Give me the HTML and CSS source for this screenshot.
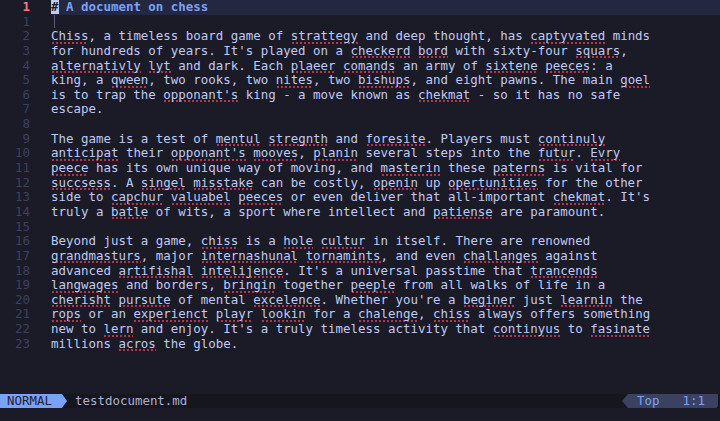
FILE: index.html
```html
<!DOCTYPE html>
<html>
<head>
<meta charset="utf-8">
<link rel="stylesheet" href="styles.css">
</head>
<body>
<div class="editor">
  <div class="buffer">
    <div class="row cur"><span class="ln curnr">1</span><span class="txt"><span class="h"><span class="cursor">#</span> A document on chess</span></span></div>
    <div class="row"><span class="ln">1</span><span class="txt"><span class="guide"></span></span></div>
    <div class="row"><span class="ln">2</span><span class="txt"><span class="sp">Chiss</span>, a timeless board game of <span class="sp">strattegy</span> and deep thought, has <span class="sp">captyvated</span> minds</span></div>
    <div class="row"><span class="ln">3</span><span class="txt">for hundreds of years. It's played on a <span class="sp">checkerd</span> <span class="sp">bord</span> with sixty-four <span class="sp">squars</span>,</span></div>
    <div class="row"><span class="ln">4</span><span class="txt"><span class="sp">alternativly</span> <span class="sp">lyt</span> and dark. Each <span class="sp">plaeer</span> <span class="sp">comands</span> an army of <span class="sp">sixtene</span> <span class="sp">peeces</span>: a</span></div>
    <div class="row"><span class="ln">5</span><span class="txt">king, a <span class="sp">qween</span>, two rooks, two <span class="sp">nites</span>, two <span class="sp">bishups</span>, and eight pawns. The main <span class="sp">goel</span></span></div>
    <div class="row"><span class="ln">6</span><span class="txt">is to trap the <span class="sp">opponant's</span> king - a move known as <span class="sp">chekmat</span> - so it has no safe</span></div>
    <div class="row"><span class="ln">7</span><span class="txt">escape.</span></div>
    <div class="row"><span class="ln">8</span><span class="txt"></span></div>
    <div class="row"><span class="ln">9</span><span class="txt">The game is a test of <span class="sp">mentul</span> <span class="sp">stregnth</span> and <span class="sp">foresite</span>. Players must <span class="sp">continuly</span></span></div>
    <div class="row"><span class="ln">10</span><span class="txt"><span class="sp">anticipat</span> their <span class="sp">opponant's</span> <span class="sp">mooves</span>, <span class="sp">planin</span> several steps into the <span class="sp">futur</span>. <span class="sp">Evry</span></span></div>
    <div class="row"><span class="ln">11</span><span class="txt"><span class="sp">peece</span> has its own unique way of moving, and <span class="sp">masterin</span> these <span class="sp">paterns</span> is vital for</span></div>
    <div class="row"><span class="ln">12</span><span class="txt"><span class="sp">succsess</span>. A <span class="sp">singel</span> <span class="sp">misstake</span> can be costly, <span class="sp">openin</span> up <span class="sp">opertunities</span> for the other</span></div>
    <div class="row"><span class="ln">13</span><span class="txt">side to <span class="sp">capchur</span> <span class="sp">valuabel</span> <span class="sp">peeces</span> or even deliver that all-important <span class="sp">chekmat</span>. It's</span></div>
    <div class="row"><span class="ln">14</span><span class="txt">truly a <span class="sp">batle</span> of wits, a sport where intellect and <span class="sp">patiense</span> are paramount.</span></div>
    <div class="row"><span class="ln">15</span><span class="txt"></span></div>
    <div class="row"><span class="ln">16</span><span class="txt">Beyond just a game, <span class="sp">chiss</span> is a <span class="sp">hole</span> <span class="sp">cultur</span> in itself. There are renowned</span></div>
    <div class="row"><span class="ln">17</span><span class="txt"><span class="sp">grandmasturs</span>, major <span class="sp">internashunal</span> <span class="sp">tornamints</span>, and even <span class="sp">challanges</span> against</span></div>
    <div class="row"><span class="ln">18</span><span class="txt">advanced <span class="sp">artifishal</span> <span class="sp">intelijence</span>. It's a universal passtime that <span class="sp">trancends</span></span></div>
    <div class="row"><span class="ln">19</span><span class="txt"><span class="sp">langwages</span> and borders, <span class="sp">bringin</span> together <span class="sp">peeple</span> from all walks of life in a</span></div>
    <div class="row"><span class="ln">20</span><span class="txt"><span class="sp">cherisht</span> <span class="sp">pursute</span> of mental <span class="sp">excelence</span>. Whether you're a <span class="sp">beginer</span> just <span class="sp">learnin</span> the</span></div>
    <div class="row"><span class="ln">21</span><span class="txt"><span class="sp">rops</span> or an <span class="sp">experienct</span> <span class="sp">playr</span> <span class="sp">lookin</span> for a <span class="sp">chalenge</span>, <span class="sp">chiss</span> always offers something</span></div>
    <div class="row"><span class="ln">22</span><span class="txt">new to <span class="sp">lern</span> and enjoy. It's a truly timeless activity that <span class="sp">continyus</span> to <span class="sp">fasinate</span></span></div>
    <div class="row"><span class="ln">23</span><span class="txt">millions <span class="sp">acros</span> the globe.</span></div>
  </div>
  <div class="status">
    <div class="mode">NORMAL</div>
    <div class="file">testdocument.md</div>
    <div class="fill"></div>
    <div class="pos"><span class="top">Top</span><span class="lc">1:1</span></div>
  </div>
  <div class="cmd"></div>
</div>
</body>
</html>
```

FILE: styles.css
```css
html, body {
  margin: 0;
  padding: 0;
  background: #1a1b26;
}
body {
  width: 720px;
  height: 421px;
  overflow: hidden;
  font-family: "DejaVu Sans Mono", monospace;
  font-size: 12.45px;
  color: #c0caf5;
}
.editor {
  display: flex;
  flex-direction: column;
  height: 421px;
}
.buffer {
  height: 394px;
}
.row {
  display: flex;
  height: 14.65px;
  line-height: 14.65px;
  white-space: pre;
}
.ln {
  flex: 0 0 30px;
  text-align: right;
  color: #3b4261;
  margin-right: 21px;
}
.ln.curnr {
  color: #f7768e;
  font-weight: bold;
}
.txt {
  flex: 1;
  position: relative;
}
.row.cur .txt {
  background: #232740;
}
.h {
  color: #7aa2f7;
  font-weight: bold;
}
.cursor {
  background: #c0caf5;
  color: #1a1b26;
}
.guide {
  position: absolute;
  left: 3px;
  top: 0;
  width: 1px;
  height: 13px;
  background: #545c7e;
}
.sp {
  display: inline-block;
  height: 14.65px;
  background-image:
    linear-gradient(45deg, transparent 40%, #b8344a 40%, #b8344a 65%, transparent 65%),
    linear-gradient(-45deg, transparent 40%, #b8344a 40%, #b8344a 65%, transparent 65%);
  background-size: 4px 2px;
  background-repeat: repeat-x;
  background-position: 0 12.5px;
}
.status {
  display: flex;
  align-items: stretch;
  height: 14px;
  line-height: 14px;
  background: #16161e;
  white-space: pre;
}
.mode {
  position: relative;
  background: #7aa2f7;
  color: #1d202f;
  padding: 0 0 0 7px;
  width: 55px;
}
.mode::after {
  content: "";
  position: absolute;
  right: -5px;
  top: 0;
  border-top: 7px solid transparent;
  border-bottom: 7px solid transparent;
  border-left: 5px solid #7aa2f7;
}
.file {
  color: #a9b1d6;
  padding-left: 13px;
}
.fill {
  flex: 1;
}
.pos {
  position: relative;
  background: #3b4261;
  color: #7aa2f7;
  width: 81px;
  padding-left: 9px;
  margin-right: 2px;
  border-bottom-right-radius: 3px;
}
.pos::before {
  content: "";
  position: absolute;
  left: -6px;
  top: 0;
  border-top: 7px solid transparent;
  border-bottom: 7px solid transparent;
  border-right: 6px solid #3b4261;
}
.lc {
  margin-left: 23px;
}
.cmd {
  flex: 1;
}
```
